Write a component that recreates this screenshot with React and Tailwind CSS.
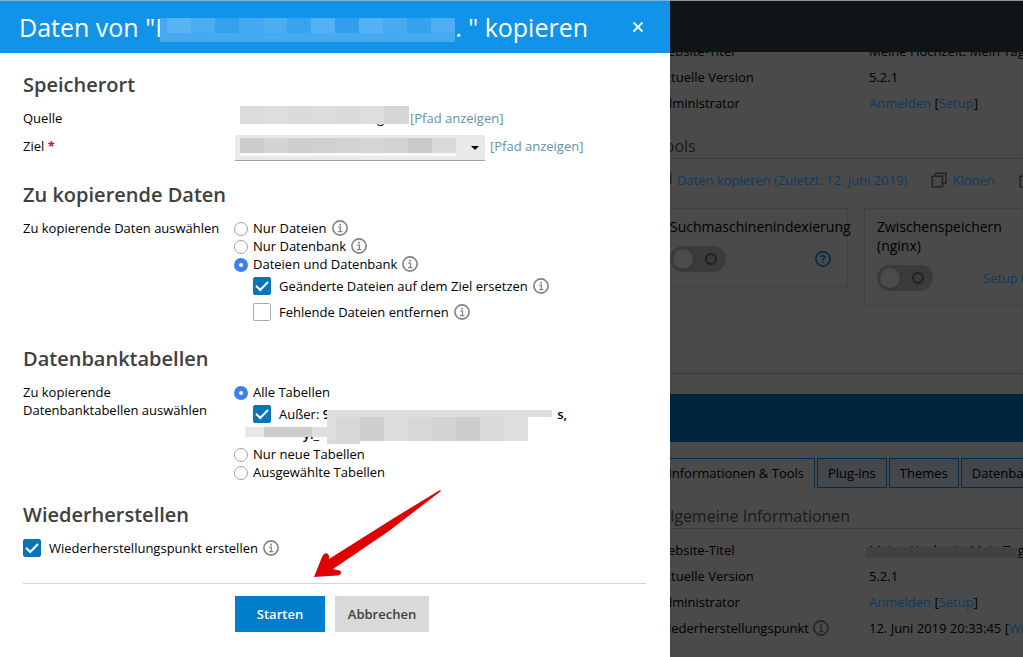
import React from 'react';
import clsx from 'clsx';

const InfoIcon = ({ className }) => (
    <svg viewBox="0 0 16 16" className={clsx('w-4 h-4 shrink-0', className)} fill="none" stroke="currentColor">
        <circle cx="8" cy="8" r="7.1" strokeWidth="1.7" />
        <path d="M6.3 7.2H8.4V11.4M6 11.6H10.4" strokeWidth="1.3" />
        <path d="M7.2 4.6H8.9" strokeWidth="1.6" />
    </svg>
);

const CloneIcon = () => (
    <svg viewBox="0 0 16 16" className="w-4 h-4 shrink-0 text-[#242424]" fill="none" stroke="currentColor" strokeWidth="1.5">
        <path d="M4.5 4V1.2H14.8V11.5H12" />
        <rect x="1.2" y="4.2" width="10.3" height="10.6" />
    </svg>
);

// Verpixelte Stelle, die vertrauliche Angaben verdeckt
const Mosaic = ({ cells, className }) => (
    <span className={clsx('flex', className)}>
        {cells.map((cell, index) => (
            <span key={index} className={clsx('h-full', cell)} />
        ))}
    </span>
);

const titleCells = [
    'w-[7px] bg-[#45a9f1]', 'w-6 bg-[#58b3f3]', 'w-6 bg-[#4aacf1]', 'w-6 bg-[#34a1ef]', 'w-6 bg-[#45aaf1]', 'w-6 bg-[#4cadf1]',
    'w-6 bg-[#37a3ef]', 'w-6 bg-[#54b1f3]', 'w-6 bg-[#2f9fee]', 'w-6 bg-[#54b1f3]', 'w-6 bg-[#48abf1]', 'w-6 bg-[#35a2ef]', 'flex-1 bg-[#4eaef1]',
];
const sourceCells = [
    'w-6 bg-[#dcdcdc]', 'w-6 bg-[#dedede]', 'w-6 bg-[#dbdbdb]', 'w-6 bg-[#dddddd]', 'w-6 bg-[#dadada]', 'w-6 bg-[#dedede]', 'flex-1 bg-[#d6d6d6]',
];
const targetCells = [
    'w-6 bg-[#cccccc]', 'w-6 bg-[#d4d4d4]', 'w-6 bg-[#cecece]', 'w-6 bg-[#d0d0d0]', 'w-6 bg-[#d3d3d3]', 'w-6 bg-[#d5d5d5]',
    'w-6 bg-[#d2d2d2]', 'w-6 bg-[#cacaca]', 'flex-1 bg-[#d9d9d9]',
];
const tableCells = [
    'w-[9px] bg-[#dedede]', 'w-6 bg-[#d8d8d8]', 'w-6 bg-[#cfcfcf]', 'w-6 bg-[#dcdcdc]', 'w-6 bg-[#d8d8d8]', 'w-6 bg-[#d3d3d3]',
    'w-6 bg-[#cccccc]', 'w-6 bg-[#d9d9d9]', 'w-6 bg-[#dfdfdf]', 'flex-1 bg-[#e6e6e6]',
];

const Radio = ({ name, label, checked, info }) => (
    <div className="flex items-center h-[18px]">
        <label className="flex items-center">
            <input
                type="radio"
                name={name}
                defaultChecked={checked}
                className="appearance-none w-3.5 h-3.5 mt-px mr-[5px] ml-[-1px] rounded-full border border-[#a0a0a0] bg-white checked:border-[5px] checked:border-[#3b7ff0]"
            />
            {label}
        </label>
        {info && <InfoIcon className="ml-[5px] text-[#848484]" />}
    </div>
);

const Checkbox = ({ label, checked, info, className }) => (
    <div className={clsx('flex items-center', className)}>
        <label className="flex items-center">
            <span className="relative w-[18px] h-[18px] mr-2">
                <input
                    type="checkbox"
                    defaultChecked={checked}
                    className="peer block appearance-none w-[18px] h-[18px] rounded-xs border border-[#a8a8a8] bg-white checked:border-[#0975b9] checked:bg-[#0975b9]"
                />
                <svg viewBox="0 0 18 18" className="absolute inset-0 hidden peer-checked:block pointer-events-none" fill="none" stroke="white" strokeWidth="2">
                    <path d="M3 8.8L7.2 13L15 5" />
                </svg>
            </span>
            {label}
        </label>
        {info && <InfoIcon className="ml-[5px] text-[#848484]" />}
    </div>
);

const Section = ({ title, children }) => (
    <section className="mb-5">
        <h2 className="text-xl leading-7 font-semibold text-[#404040] mb-2.5">{title}</h2>
        {children}
    </section>
);

const Field = ({ label, children, className }) => (
    <div className={clsx('flex', className)}>
        <div className="w-[212px] shrink-0">{label}</div>
        <div className="flex-1">{children}</div>
    </div>
);

const CopyDialog = () => (
    <div role="dialog" aria-labelledby="dialog-title" className="w-[670px] shrink-0 bg-white text-black">
        <header className="flex items-center justify-between h-[53px] pl-[19px] pr-6 bg-[#1193ea] border-t border-[#7fb4d8] text-white">
            <h1 id="dialog-title" className="flex text-[25px] leading-8 whitespace-pre">
                <span>Daten von "</span>
                {/* Name der Website, bis auf den Anfang verdeckt */}
                <span className="relative w-[300px]">
                    M
                    <Mosaic cells={titleCells} className="absolute left-[5px] right-0 top-[7px] h-[15px] bg-[#1193ea]" />
                    <span className="absolute left-[5px] right-0 top-[22px] h-[9px] bg-[#46aaf1]" />
                </span>
                <span>. " kopieren</span>
            </h1>
            <button aria-label="Schließen" className="w-4 h-4">
                <svg viewBox="0 0 16 16" className="w-4 h-4" stroke="currentColor" strokeWidth="1.8">
                    <path d="M3.5 3.5L12.5 12.5M12.5 3.5L3.5 12.5" />
                </svg>
            </button>
        </header>

        <form className="pl-[23px] pr-6 pt-[18px]" onSubmit={(e) => e.preventDefault()}>
            <Section title="Speicherort">
                <Field label="Quelle">
                    <div className="flex pl-[5px]">
                        <span className="relative w-[169px] mr-px pl-[137px]">
                            g
                            <Mosaic cells={sourceCells} className="absolute inset-x-0 -top-[3px] h-[18px]" />
                        </span>
                        <a href="#quelle" className="text-[#6593a6]">[Pfad anzeigen]</a>
                    </div>
                </Field>
                <Field className="mt-2" label={<label htmlFor="ziel" className="block leading-[22px]">Ziel <b className="text-[#c8102e]">*</b></label>}>
                    <div className="flex">
                        <div className="relative w-[250px] mr-[5px]">
                            <select id="ziel" className="block appearance-none w-full h-[26px] bg-[#e9e9e9] border-b border-[#a0a0a0]" />
                            <Mosaic cells={targetCells} className="absolute left-[5px] top-[3px] w-[216px] h-[15px] pointer-events-none" />
                            <span className="absolute left-[5px] top-[18px] w-[216px] h-[3px] bg-[#f8f8f8]" />
                            <svg viewBox="0 0 8 4" className="absolute right-1.5 top-[11px] w-2 h-1 pointer-events-none">
                                <path d="M0 0H8L4 4Z" />
                            </svg>
                        </div>
                        <a href="#ziel-pfad" className="leading-[22px] text-[#6593a6]">[Pfad anzeigen]</a>
                    </div>
                </Field>
            </Section>

            <Section title="Zu kopierende Daten">
                <Field label="Zu kopierende Daten auswählen">
                    <Radio name="daten" label="Nur Dateien" info />
                    <Radio name="daten" label="Nur Datenbank" info />
                    <Radio name="daten" label="Dateien und Datenbank" checked info />
                    <Checkbox className="h-[26px] pl-[18px]" label="Geänderte Dateien auf dem Ziel ersetzen" checked info />
                    <Checkbox className="h-[26px] pl-[18px]" label="Fehlende Dateien entfernen" info />
                </Field>
            </Section>

            <Section title="Datenbanktabellen">
                <Field label={<>Zu kopierende<br />Datenbanktabellen auswählen</>}>
                    <Radio name="tabellen" label="Alle Tabellen" checked />
                    <div className="relative h-11">
                        <Checkbox
                            className="h-[26px] pl-[18px]"
                            checked
                            label={
                                <span className="flex w-[288px]">
                                    Außer:&nbsp;<b className="font-semibold">9</b>
                                    <b className="ml-auto font-semibold">s,</b>
                                </span>
                            }
                        />
                        <b className="block -mt-0.5 pl-[68px] leading-[18px] font-semibold">y._</b>
                        <span className="absolute left-[92px] top-[9px] w-[225px] h-[7px] bg-[#dedede]" />
                        <Mosaic cells={tableCells} className="absolute left-[92px] top-4 w-[201px] h-6" />
                        <span className="absolute left-[92px] top-10 w-[33px] h-[3px] bg-[#d8d8d8]" />
                        <Mosaic
                            cells={['w-[19px] bg-[#e6e8ea]', 'w-12 bg-[#cccccc]', 'flex-1 bg-[#e0e0e0]']}
                            className="absolute left-2.5 top-[26px] w-[82px] h-2.5"
                        />
                    </div>
                    <Radio name="tabellen" label="Nur neue Tabellen" />
                    <Radio name="tabellen" label="Ausgewählte Tabellen" />
                </Field>
            </Section>

            <Section title="Wiederherstellen">
                <Checkbox className="h-[18px]" label="Wiederherstellungspunkt erstellen" checked info />
            </Section>

            <div className="relative flex gap-2.5 mt-[26px] pt-3 pl-[212px] border-t border-[#d4d4d4]">
                <button type="submit" className="w-[90px] h-9 bg-[#007dcc] text-white font-semibold">Starten</button>
                <button type="button" className="w-[94px] h-9 bg-[#d9d9d9] text-[#404040] font-semibold">Abbrechen</button>
                <svg viewBox="0 0 130 90" className="absolute left-[290px] bottom-[53px] w-[130px] h-[90px] pointer-events-none">
                    <path
                        d="M127 1L81 29L16 70L16 67Q15 63 11 65L9 68L1 88L24 86.500Q28 86 28 83.500Q28 81 24 81L20 80L76 42L128 2Z"
                        fill="#e00000"
                    />
                </svg>
            </div>
        </form>
    </div>
);

const Row = ({ label, children }) => (
    <div className="flex shrink-0 h-[26px] items-center">
        <div className="w-[213px] shrink-0 flex items-center">{label}</div>
        <div className="flex">{children}</div>
    </div>
);

const Link = ({ children, className }) => (
    <a href="#site" className={clsx('text-[#0f3a5e]', className)}>{children}</a>
);

const AdminLinks = () => (
    <>
        <Link>Anmelden</Link>&nbsp;[<Link>Setup</Link>]
    </>
);

const PanelTitle = ({ children }) => (
    <h3 className="h-[25px] text-base leading-6 text-[#191919] border-b border-[#3b3b3b]">{children}</h3>
);

const Toggle = ({ label }) => (
    <label className="relative flex w-14 h-[26px] rounded-full bg-[#3b3b3b]">
        <input type="checkbox" role="switch" aria-label={label} className="appearance-none absolute inset-0" />
        <span className="w-5 h-5 mt-[3px] ml-[3px] rounded-full bg-[#4b4b4b] shadow-sm" />
        <span className="w-3 h-3 mt-[7px] ml-[12px] rounded-full border-2 border-[#222222]" />
    </label>
);

const HelpIcon = () => (
    <svg viewBox="0 0 16 16" className="w-4 h-4" fill="none" stroke="#042c48" strokeWidth="1.7">
        <circle cx="8" cy="8" r="7.1" />
        <path d="M6 6.400Q6.200 4.700 8 4.700Q10 4.700 10 6.300Q10 7.200 8 8.500V9.500M8 10.800V12.200" strokeWidth="1.4" />
    </svg>
);

// Abgedunkelte Seite hinter dem Dialog
const SitePage = () => (
    <main className="flex-1 min-w-0 overflow-hidden bg-[#4a4a4a] text-black whitespace-nowrap">
        <div className="h-[52px] bg-[#0f1417] border-t border-[#8f9499]" />
        <div className="-ml-3.5 w-[480px]">
            <div className="h-[64px] overflow-hidden flex flex-col justify-end">
                <Row label="Website-Titel">Meine Hochzeit. Mein Tag.</Row>
                <Row label="Aktuelle Version">5.2.1</Row>
                <Row label="Administrator"><AdminLinks /></Row>
            </div>
            <div className="mt-[18px]"><PanelTitle>Tools</PanelTitle></div>
            <div className="flex items-center h-[42px]">
                <CloneIcon />
                <Link className="ml-[5px]">Daten kopieren (Zuletzt: 12. Juni 2019)</Link>
                <span className="w-6" />
                <CloneIcon />
                <Link className="ml-[5px]">Klonen</Link>
                <span className="w-6" />
                <CloneIcon />
            </div>
            <div className="flex items-start gap-4 mt-[7px]">
                <div className="w-[192px] h-[79px] pl-[13px] pt-2 rounded-xs border border-[#404040]">
                    <div className="text-sm leading-[19px]">Suchmaschinenindexierung</div>
                    <div className="flex items-center justify-between mt-2.5 pr-4">
                        <Toggle label="Suchmaschinenindexierung" />
                        <HelpIcon />
                    </div>
                </div>
                <div className="w-[192px] h-[98px] pl-3 pt-2 rounded-xs border border-[#404040]">
                    <div className="text-sm leading-[19px]">Zwischenspeichern<br />(nginx)</div>
                    <div className="flex items-center mt-2.5 gap-[50px]">
                        <Toggle label="Zwischenspeichern" />
                        <Link className="flex items-center gap-1">Setup <HelpIcon /></Link>
                    </div>
                </div>
            </div>
        </div>
        <div className="mt-[67px] border-t border-[#383838]" />
        <div className="mt-5 h-12 bg-[#00253d]" />
        <div className="-ml-3.5 w-[480px]">
            <nav className="flex gap-0.5 mt-4 h-[30px]">
                <button className="w-[159px] pr-2.5 text-right border-y border-r border-[#042c48] border-b-transparent">Informationen &amp; Tools</button>
                <button className="px-2.5 bg-[#44474b] border border-[#042c48]">Plug-ins</button>
                <button className="px-2.5 bg-[#44474b] border border-[#042c48]">Themes</button>
                <button className="px-2.5 bg-[#44474b] border border-[#042c48]">Datenbank</button>
            </nav>
            <div className="mt-4 mb-2"><PanelTitle>Allgemeine Informationen</PanelTitle></div>
            <Row label="Website-Titel">
                <span className="relative">
                    Meine Hochzeit. Mein Tag.
                    <span className="absolute -left-[3px] top-1.5 w-[151px] h-[11px] bg-[#414141]" />
                </span>
            </Row>
            <Row label="Aktuelle Version">5.2.1</Row>
            <Row label="Administrator"><AdminLinks /></Row>
            <Row label={<>Wiederherstellungspunkt <InfoIcon className="ml-1 text-[#262626]" /></>}>
                12. Juni 2019 20:33:45 [<Link>Wiederherstellen</Link>]
            </Row>
        </div>
    </main>
);

const App = () => (
    <div className="flex min-h-screen overflow-hidden font-['Open_Sans',sans-serif] text-[13px] leading-[18px]">
        <CopyDialog />
        <SitePage />
    </div>
);

export default App;
